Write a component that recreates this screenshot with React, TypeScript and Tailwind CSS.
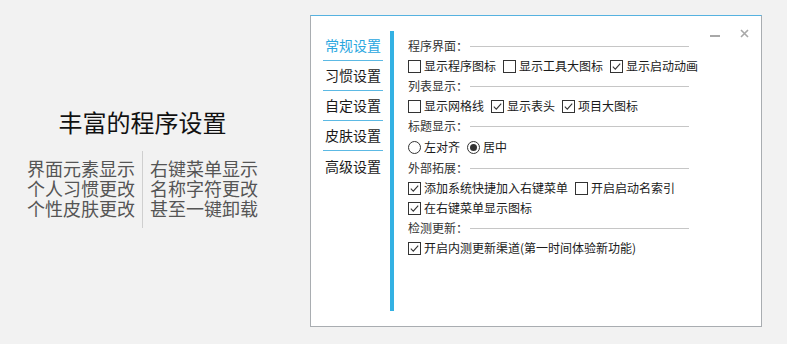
import React from "react";

const font = "font-['Noto_Sans_CJK_SC','Noto_Sans',sans-serif]";

function Box({ checked }: { checked?: boolean }) {
    return (
        <svg width="13" height="13" viewBox="0 0 13 13" className="shrink-0">
            <rect x="0.5" y="0.5" width="12" height="12" fill="#fff" stroke="#333" />
            {checked && <polyline points="2.8,6.6 5.3,9.1 10.2,3.6" fill="none" stroke="#333" strokeWidth="1.1" />}
        </svg>
    );
}

function Dot({ checked }: { checked?: boolean }) {
    return (
        <svg width="13" height="13" viewBox="0 0 13 13" className="shrink-0">
            <circle cx="6.5" cy="6.5" r="6" fill="#fff" stroke="#333" />
            {checked && <circle cx="6.5" cy="6.5" r="3.5" fill="#333" />}
        </svg>
    );
}

function Item({ label, checked, radio }: { label: string; checked?: boolean; radio?: boolean }) {
    return (
        <div className="flex items-center gap-[3px] mr-[7px]">
            {radio ? <Dot checked={checked} /> : <Box checked={checked} />}
            <span className="text-[12px] leading-[20px] text-[#1a1a1a] whitespace-nowrap">{label}</span>
        </div>
    );
}

function Heading({ title }: { title: string }) {
    return (
        <div className="flex items-center h-[20px]">
            <span className="text-[12px] leading-[20px] text-[#333] whitespace-nowrap">{title}</span>
            <div className="flex-1 ml-[2px] h-px bg-[#c6c6c6]" />
        </div>
    );
}

const navItems = ["常规设置", "习惯设置", "自定设置", "皮肤设置", "高级设置"];
const leftLines = ["界面元素显示", "个人习惯更改", "个性皮肤更改"];
const rightLines = ["右键菜单显示", "名称字符更改", "甚至一键卸载"];

export default function App() {
    return (
        <main className={`flex w-[787px] h-[344px] bg-[#f2f2f2] ${font}`}>
            <section className="w-[285px] flex flex-col items-center pt-[106px]">
                <h1 className="text-[24px] leading-[32px] text-[#111]">丰富的程序设置</h1>
                <div className="flex items-start mt-[13px]">
                    <div className="flex flex-col mt-[7px] text-[18px] text-[#555]">
                        {leftLines.map((l) => (
                            <div key={l} className="h-[20px] leading-[20px]">{l}</div>
                        ))}
                    </div>
                    <div className="w-px h-[77px] bg-[#cfcfcf] mx-[7px]" />
                    <div className="flex flex-col mt-[7px] text-[18px] text-[#555]">
                        {rightLines.map((l) => (
                            <div key={l} className="h-[20px] leading-[20px]">{l}</div>
                        ))}
                    </div>
                </div>
            </section>

            <div className="ml-[25px] mt-[15px] w-[452px] h-[312px] bg-white border border-[#a9adb1] border-t-[#56b2e0] flex">
                <nav className="pl-[12px] pt-[15px] w-[79px] shrink-0">
                    {navItems.map((n, i) => (
                        <div
                            key={n}
                            className={`w-[60px] h-[30px] flex items-center justify-center text-[14px] ${
                                i < navItems.length - 1 ? "border-b border-[#5cb9e4]" : ""
                            } ${i === 0 ? "text-[#2aa7df]" : "text-[#1a1a1a]"}`}
                        >
                            {n}
                        </div>
                    ))}
                </nav>
                <div className="mt-[15px] w-[4px] h-[280px] bg-[#33b1e3] shrink-0" />
                <div className="pl-[14px] pt-[20px] w-[295px] shrink-0 flex flex-col">
                    <Heading title="程序界面：" />
                    <div className="flex items-center h-[20px]">
                        <Item label="显示程序图标" />
                        <Item label="显示工具大图标" />
                        <Item label="显示启动动画" checked />
                    </div>
                    <Heading title="列表显示：" />
                    <div className="flex items-center h-[20px]">
                        <Item label="显示网格线" />
                        <Item label="显示表头" checked />
                        <Item label="项目大图标" checked />
                    </div>
                    <Heading title="标题显示：" />
                    <div className="flex items-center h-[22px]">
                        <Item label="左对齐" radio />
                        <Item label="居中" radio checked />
                    </div>
                    <Heading title="外部拓展：" />
                    <div className="flex items-center h-[20px]">
                        <Item label="添加系统快捷加入右键菜单" checked />
                        <Item label="开启启动名索引" />
                    </div>
                    <div className="flex items-center h-[20px]">
                        <Item label="在右键菜单显示图标" checked />
                    </div>
                    <Heading title="检测更新：" />
                    <div className="flex items-center h-[20px]">
                        <Item label="开启内测更新渠道(第一时间体验新功能)" checked />
                    </div>
                </div>
                <div className="flex items-start pt-[12px] pl-[21px] gap-[20px]">
                    <div className="mt-[7px] w-[10px] h-[2px] bg-[#a8a8a8]" />
                    <svg width="9" height="9" viewBox="0 0 9 9" className="mt-[1px]">
                        <path d="M1 1 L8 8 M8 1 L1 8" stroke="#a8a8a8" strokeWidth="1.6" />
                    </svg>
                </div>
            </div>
        </main>
    );
}
